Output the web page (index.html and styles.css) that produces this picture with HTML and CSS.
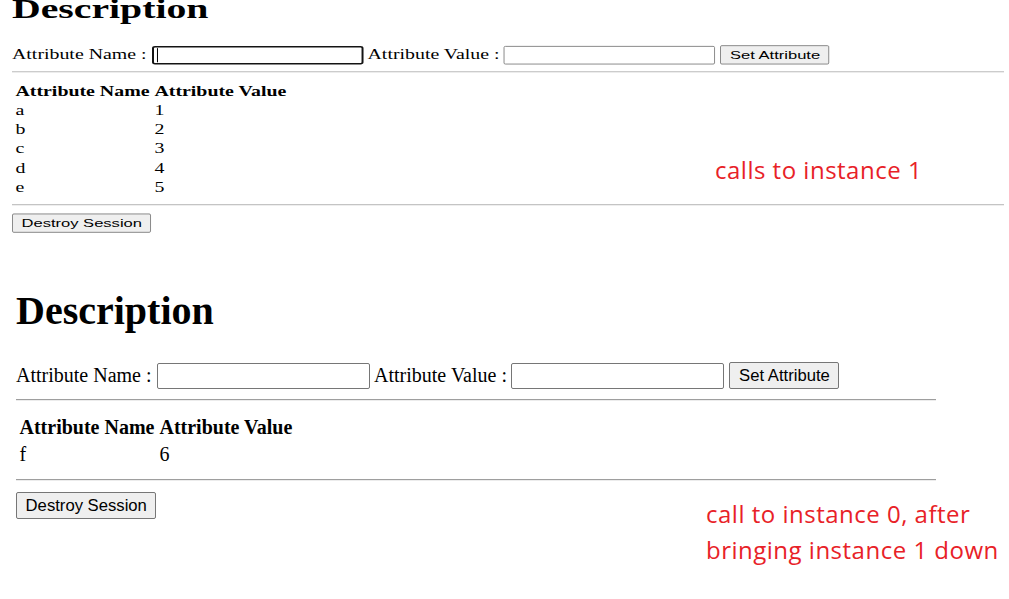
FILE: index.html
```html
<!DOCTYPE html>
<html lang="en">
<head>
<meta charset="utf-8">
<title>Description</title>
<link rel="stylesheet" href="styles.css">
</head>
<body>
  <section class="shot shot-top">
    <div class="page page-top">
      <h1 class="title">Description</h1>
      <div class="form-row">
        <span class="label">Attribute Name :</span>
        <span class="field-wrap"><input class="field field-name field-focused" type="text"></span>
        <span class="label label-value">Attribute Value :</span>
        <input class="field field-value" type="text">
        <button class="btn btn-set" type="button">Set Attribute</button>
      </div>
      <hr class="rule rule-first">
      <table class="attrs">
        <thead>
          <tr><th>Attribute Name</th><th>Attribute Value</th></tr>
        </thead>
        <tbody>
          <tr><td>a</td><td>1</td></tr>
          <tr><td>b</td><td>2</td></tr>
          <tr><td>c</td><td>3</td></tr>
          <tr><td>d</td><td>4</td></tr>
          <tr><td>e</td><td>5</td></tr>
        </tbody>
      </table>
      <hr class="rule rule-second">
      <div class="actions"><button class="btn" type="button">Destroy Session</button></div>
    </div>
    <p class="note note-top">calls to instance 1</p>
  </section>

  <section class="shot shot-bottom">
    <div class="page page-bottom">
      <h1 class="title">Description</h1>
      <div class="form-row">
        <span class="label">Attribute Name :</span>
        <input class="field field-name" type="text">
        <span class="label label-value">Attribute Value :</span>
        <input class="field field-value" type="text">
        <button class="btn btn-set" type="button">Set Attribute</button>
      </div>
      <hr class="rule rule-first">
      <table class="attrs">
        <thead>
          <tr><th>Attribute Name</th><th>Attribute Value</th></tr>
        </thead>
        <tbody>
          <tr><td>f</td><td>6</td></tr>
        </tbody>
      </table>
      <hr class="rule rule-second">
      <div class="actions"><button class="btn" type="button">Destroy Session</button></div>
    </div>
    <p class="note note-bottom">call to instance 0, after<br>bringing instance 1 down</p>
  </section>
</body>
</html>
```

FILE: styles.css
```css
html, body {
  margin: 0;
  padding: 0;
  background: #ffffff;
}

body {
  width: 1009px;
  height: 599px;
  overflow: hidden;
  font-family: "Liberation Serif", "Times New Roman", serif;
  color: #000;
}

.shot {
  position: relative;
}

.shot-top {
  height: 240px;
  overflow: hidden;
  padding-left: 12px;
}

.shot-bottom {
  padding-top: 48px;
  padding-left: 16px;
  height: 311px;
}

.page {
  font-size: 20px;
  line-height: 23px;
}

.page-top {
  width: 999px;
  margin-top: -6.6px;
  transform: scale(0.993, 0.707);
  transform-origin: 0 0;
}

.page-bottom {
  width: 920px;
}

.title {
  margin: 0;
  font-size: 40px;
  line-height: 46px;
  font-weight: bold;
}

.form-row {
  display: flex;
  align-items: center;
  height: 27px;
  margin-top: 28px;
  white-space: nowrap;
}

.label {
  display: block;
}

.label-value {
  margin-left: 4px;
}

.field-wrap {
  position: relative;
  display: flex;
  margin-left: 5.5px;
}

.field-wrap::after {
  content: "";
  position: absolute;
  left: 5px;
  top: 3px;
  bottom: 3px;
  width: 1px;
  background: #000;
}

.field {
  box-sizing: border-box;
  width: 213px;
  height: 26px;
  margin: 0;
  padding: 0 3px;
  border: 1px solid #767676;
  border-radius: 2px;
  background: #fff;
  font-family: "Liberation Sans", Arial, sans-serif;
  font-size: 16.67px;
  outline: none;
}

.page-bottom .field-name {
  margin-left: 5.5px;
}

.field-focused {
  border: 2px solid #141414;
  border-radius: 3px;
}

.field-value {
  margin-left: 4.5px;
  width: 212.5px;
}

.btn {
  box-sizing: border-box;
  height: 27px;
  margin: 0;
  padding: 0 8.6px;
  border: 1px solid #767676;
  border-radius: 2px;
  background: #efefef;
  color: #000;
  font-family: "Liberation Sans", Arial, sans-serif;
  font-size: 16.67px;
  line-height: 25px;
  white-space: nowrap;
}

.btn-set {
  margin-left: 5.5px;
}

.rule {
  height: 0;
  margin: 0;
  border: 0;
  border-top: 1px solid #9e9e9e;
  border-bottom: 1px solid #ececec;
}

.rule-first {
  margin-top: 10px;
}

.rule-second {
  margin-top: 10px;
}

.attrs {
  margin-top: 12px;
  border-collapse: separate;
  border-spacing: 2px;
}

.attrs th,
.attrs td {
  padding: 1px 1.5px;
  text-align: left;
  vertical-align: middle;
  line-height: 23px;
}

.attrs th {
  font-weight: bold;
}

.actions {
  display: flex;
  margin-top: 11px;
}

.note {
  position: absolute;
  margin: 0;
  font-family: "Open Sans", "Noto Sans", sans-serif;
  font-size: 24px;
  letter-spacing: 0.5px;
  color: #e82127;
  white-space: nowrap;
}

.note-top {
  left: 715px;
  top: 154px;
  line-height: 32px;
}

.note-bottom {
  left: 706px;
  top: 256px;
  line-height: 36px;
}
```
